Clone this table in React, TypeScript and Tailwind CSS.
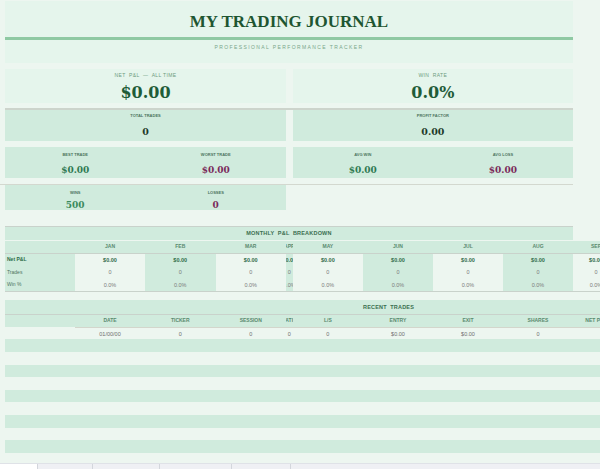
import React from "react";

const GRID = "grid grid-cols-[70px_70px_70.5px_70.5px_6.7px_70.3px_70px_70px_70px_46px]";

const months = ["JAN", "FEB", "MAR", "APR", "MAY", "JUN", "JUL", "AUG", "SEP"];

function shade(i: number) {
  return i % 2 === 1 ? "bg-[#d0ebdd]" : "bg-[#edf6f0]";
}

function C({ children, className = "" }: { children?: React.ReactNode; className?: string }) {
  return (
    <div className={`flex items-center justify-center overflow-hidden whitespace-nowrap ${className}`}>
      {children}
    </div>
  );
}

const bigLabel = "h-[5px] leading-[5px] text-[5px] tracking-[0.35px] text-[#6e9c80] whitespace-nowrap";
const smallLabel = "h-[4px] leading-[4px] text-[4px] font-bold text-[#4d7560] whitespace-nowrap";
const serif = "font-['DejaVu_Serif',serif] font-bold whitespace-nowrap";

export default function App() {
  const tradeHeads = ["DATE", "TICKER", "SESSION", "RATIO", "L/S", "ENTRY", "EXIT", "SHARES", "NET P&L"];
  const tradeData = ["01/00/00", "0", "0", "0", "0", "$0.00", "$0.00", "0", ""];
  const stripes = Array.from({ length: 10 }, (_, i) => i);
  return (
    <div className="w-[600px] h-[469px] overflow-hidden bg-[#edf6f0] flex flex-col font-['Liberation_Sans',Arial,sans-serif]">
      <div className="h-[463px] overflow-hidden flex flex-col shrink-0">
        {/* Header */}
        <div className="ml-[5px] w-[568px] mt-[1px] h-[61.7px] shrink-0 bg-[#e5f5ec] flex flex-col items-center">
          <div className="mt-[11.5px] h-[17px] leading-[17px] text-[17px] font-bold text-[#1e5631] font-['Liberation_Serif',serif] whitespace-nowrap">
            MY TRADING JOURNAL
          </div>
          <div className="mt-[7.8px] h-[3px] w-full bg-[#8fc9a3]" />
          <div className="mt-[3.4px] h-[6px] leading-[6px] text-[5px] tracking-[1.4px] text-[#7aa68a] whitespace-nowrap">
            PROFESSIONAL PERFORMANCE TRACKER
          </div>
        </div>

        {/* Stat row 1 */}
        <div className={`${GRID} mt-[6.3px] ml-[5px] h-[34.3px] shrink-0`}>
          <div className="col-span-4 bg-[#e5f5ec] flex flex-col items-center">
            <div className={`mt-[4.5px] ${bigLabel}`}>NET&nbsp; P&amp;L&nbsp; —&nbsp; ALL TIME</div>
            <div className={`mt-[6.2px] h-[16px] leading-[16px] text-[16px] text-[#1f5c38] ${serif}`}>$0.00</div>
          </div>
          <div className="col-start-6 col-span-4 bg-[#e5f5ec] flex flex-col items-center">
            <div className={`mt-[4.5px] ${bigLabel}`}>WIN&nbsp; RATE</div>
            <div className={`mt-[6.2px] h-[16px] leading-[16px] text-[16px] text-[#1f5c38] ${serif}`}>0.0%</div>
          </div>
        </div>

        <div className="mt-[5px] ml-[5px] w-[568px] h-[1.4px] bg-[#cdd4cc] shrink-0" />

        {/* Stat row 2 */}
        <div className={`${GRID} ml-[5px] h-[31.3px] shrink-0`}>
          <div className="col-span-4 bg-[#d0ebdd] flex flex-col items-center">
            <div className={`mt-[4.3px] ${smallLabel}`}>TOTAL TRADES</div>
            <div className={`mt-[9px] h-[10px] leading-[10px] text-[9.5px] text-[#1e3a2a] ${serif}`}>0</div>
          </div>
          <div className="col-start-6 col-span-4 bg-[#d0ebdd] flex flex-col items-center">
            <div className={`mt-[4.3px] ${smallLabel}`}>PROFIT FACTOR</div>
            <div className={`mt-[9px] h-[10px] leading-[10px] text-[9.5px] text-[#1e3a2a] ${serif}`}>0.00</div>
          </div>
        </div>

        {/* Stat row 3 */}
        <div className={`${GRID} mt-[6.3px] ml-[5px] h-[31px] shrink-0`}>
          <div className="col-span-4 bg-[#d0ebdd] grid grid-cols-2">
            <div className="flex flex-col items-center">
              <div className={`mt-[5.4px] ${smallLabel}`}>BEST TRADE</div>
              <div className={`mt-[8.3px] h-[10px] leading-[10px] text-[9px] text-[#2f7a52] ${serif}`}>$0.00</div>
            </div>
            <div className="flex flex-col items-center">
              <div className={`mt-[5.4px] ${smallLabel}`}>WORST TRADE</div>
              <div className={`mt-[8.3px] h-[10px] leading-[10px] text-[9px] text-[#7a2a5a] ${serif}`}>$0.00</div>
            </div>
          </div>
          <div className="col-start-6 col-span-4 bg-[#d0ebdd] grid grid-cols-2">
            <div className="flex flex-col items-center">
              <div className={`mt-[5.4px] ${smallLabel}`}>AVG WIN</div>
              <div className={`mt-[8.3px] h-[10px] leading-[10px] text-[9px] text-[#2f7a52] ${serif}`}>$0.00</div>
            </div>
            <div className="flex flex-col items-center">
              <div className={`mt-[5.4px] ${smallLabel}`}>AVG LOSS</div>
              <div className={`mt-[8.3px] h-[10px] leading-[10px] text-[9px] text-[#7a2a5a] ${serif}`}>$0.00</div>
            </div>
          </div>
        </div>

        <div className="mt-[5.4px] w-[573px] h-[1.6px] bg-[#d3d8cf] shrink-0" />

        {/* Stat row 4 */}
        <div className={`${GRID} ml-[5px] h-[24.7px] shrink-0`}>
          <div className="col-span-4 bg-[#d0ebdd] grid grid-cols-2">
            <div className="flex flex-col items-center">
              <div className={`mt-[5.4px] ${smallLabel}`}>WINS</div>
              <div className={`mt-[5.1px] h-[10px] leading-[10px] text-[9px] text-[#3a8a5c] ${serif}`}>500</div>
            </div>
            <div className="flex flex-col items-center">
              <div className={`mt-[5.4px] ${smallLabel}`}>LOSSES</div>
              <div className={`mt-[5.1px] h-[10px] leading-[10px] text-[9px] text-[#7a2a5a] ${serif}`}>0</div>
            </div>
          </div>
        </div>

        {/* Monthly breakdown */}
        <div className="mt-[16px] ml-[5px] w-[568px] h-[1px] bg-[#c9d2cb] shrink-0" />
        <div className="ml-[5px] w-[568px] h-[13px] bg-[#d0ebdd] flex items-center justify-center shrink-0">
          <span className="text-[5.5px] leading-[6px] font-bold tracking-[0.2px] text-[#3a6e50] whitespace-nowrap">
            MONTHLY&nbsp; P&amp;L&nbsp; BREAKDOWN
          </span>
        </div>
        <div className={`${GRID} mt-[1.3px] ml-[5px] h-[11.4px] bg-[#d0ebdd] shrink-0`}>
          <C />
          {months.map((m) => (
            <C key={m} className="text-[5px] font-bold text-[#5a8a6f]">{m}</C>
          ))}
        </div>
        <div className="ml-[5px] w-[600px] h-[1.3px] bg-[#c9d2cb] shrink-0" />
        <div className={`${GRID} ml-[5px] h-[37px] grid-rows-3 shrink-0`}>
          <C className="bg-[#d0ebdd] justify-start pl-[2px] text-[5px] font-bold text-[#2e6b48]">Net P&amp;L</C>
          {months.map((m, i) => (
            <C key={"p" + m} className={`${shade(i)} text-[5.5px] font-bold text-[#2e6b48]`}>$0.00</C>
          ))}
          <C className="bg-[#d0ebdd] justify-start pl-[2px] text-[5px] text-[#4f7560]">Trades</C>
          {months.map((m, i) => (
            <C key={"t" + m} className={`${shade(i)} text-[5.5px] text-[#7b7b7b]`}>0</C>
          ))}
          <C className="bg-[#d0ebdd] justify-start pl-[2px] text-[5px] text-[#4f7560]">Win %</C>
          {months.map((m, i) => (
            <C key={"w" + m} className={`${shade(i)} text-[5.5px] text-[#7b7b7b]`}>0.0%</C>
          ))}
        </div>
        <div className="ml-[5px] w-[600px] h-[1px] bg-[#c9d2cb] shrink-0" />

        {/* Recent trades */}
        <div className="mt-[8px] ml-[5px] w-[600px] h-[14px] bg-[#d0ebdd] flex items-center pl-[358px] shrink-0">
          <span className="text-[5.5px] leading-[6px] font-bold tracking-[0.2px] text-[#3a6e50] whitespace-nowrap">
            RECENT&nbsp; TRADES
          </span>
        </div>
        <div className="ml-[5px] w-[600px] h-[1px] bg-[#c9d2cb] shrink-0" />
        <div className={`${GRID} ml-[5px] h-[12.3px] bg-[#d0ebdd] shrink-0`}>
          <C />
          {tradeHeads.map((h) => (
            <C key={h} className="text-[5px] font-bold text-[#5a8a6f]">{h}</C>
          ))}
        </div>
        <div className="ml-[75px] w-[530px] h-[0.8px] bg-[#d3d6cc] shrink-0" />
        <div className={`${GRID} ml-[5px] h-[11.3px] bg-[#edf6f0] shrink-0`}>
          <C />
          {tradeData.map((d, i) => (
            <C key={"d" + i} className="text-[5.5px] text-[#6f6f6f]">{d}</C>
          ))}
        </div>
        {stripes.map((i) => (
          <div
            key={"s" + i}
            className={`ml-[5px] w-[600px] h-[12.63px] shrink-0 ${i % 2 === 0 ? "bg-[#d0ebdd]" : "bg-[#edf6f0]"}`}
          />
        ))}
      </div>

      {/* Sheet tabs */}
      <div className="h-[6px] flex shrink-0 bg-[#eff0f4] border-t border-[#dfe2e7]">
        <div className="w-[37px] bg-white" />
        <div className="w-[55px] border-l border-[#d3d6dc]" />
        <div className="w-[67px] border-l border-[#d3d6dc]" />
        <div className="w-[72px] border-l border-[#d3d6dc]" />
        <div className="w-[59px] border-l border-[#d3d6dc]" />
        <div className="flex-1 border-l border-[#d3d6dc]" />
      </div>
    </div>
  );
}
